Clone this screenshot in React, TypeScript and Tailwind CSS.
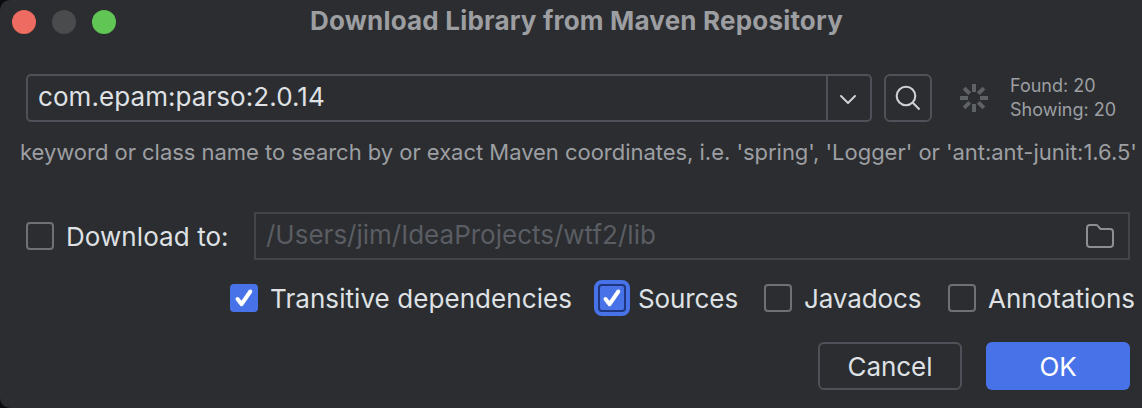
import { useState } from "react";

function CheckMark() {
  return (
    <svg viewBox="0 0 28 28" className="size-7 shrink-0" fill="none">
      <path d="M7.5 15L11.6 20.2L20.3 7.5" stroke="#fff" strokeWidth="4" strokeLinecap="round" strokeLinejoin="round" />
    </svg>
  );
}

type CheckProps = {
  label: string;
  checked?: boolean;
  focused?: boolean;
  className?: string;
  textClass?: string;
};

function Check({ label, checked = false, focused = false, className = "", textClass = "" }: CheckProps) {
  const [on, setOn] = useState(checked);
  const box = on
    ? focused
      ? "bg-[#4873e8] border-2 border-[#1f3780] outline-4 outline-[#4873e8]"
      : "bg-[#4873e8]"
    : "border-2 border-[#6f7176]";
  return (
    <button
      type="button"
      role="checkbox"
      aria-checked={on}
      onClick={() => setOn(!on)}
      className={`flex h-7 shrink-0 items-center whitespace-nowrap text-[26px] text-[#dfe1e5] outline-none ${className}`}
    >
      <span className={`flex size-7 shrink-0 items-center justify-center rounded-[4px] ${box}`}>{on && <CheckMark />}</span>
      <span className={`ml-3 pt-0.5 leading-7 ${textClass}`}>{label}</span>
    </button>
  );
}

function Spinner() {
  return (
    <svg viewBox="-14 -14 28 28" className="size-7 shrink-0" stroke="#5f6265" strokeWidth="4">
      <path d="M0 -14V-6M0 6V14M-14 0H-6M6 0H14M-9.9 -9.9L-4.3 -4.3M4.3 4.3L9.9 9.9M-9.9 9.9L-4.3 4.3M4.3 -4.3L9.9 -9.9" />
    </svg>
  );
}

export default function App() {
  return (
    <div className="h-[408px] w-[1142px] overflow-hidden bg-[#0c0d0f] font-['Inter',sans-serif]">
      <div className="flex h-full flex-col overflow-hidden rounded-l-[10px] bg-[#2b2d30]">
        <header className="flex h-[74px] shrink-0 items-start pt-[9px]">
          <div className="flex w-[310px] shrink-0 gap-4 pt-px pl-3">
            <span className="size-6 rounded-full bg-[#ed6b60]" />
            <span className="size-6 rounded-full bg-[#4a4b4d]" />
            <span className="size-6 rounded-full bg-[#61c555]" />
          </div>
          <h1 className="text-[26px] leading-6 font-bold tracking-[0.19px] whitespace-nowrap text-[#9d9ea1]">
            Download Library from Maven Repository
          </h1>
        </header>

        <div className="flex h-12 shrink-0 items-center pl-[26px]">
          <div className="flex h-12 w-[846px] shrink-0 rounded-[5px] border-2 border-[#4e5157]">
            <div className="flex-1 pl-[10px] text-[26px] leading-[42px] tracking-[0.07px] whitespace-nowrap text-[#dfe1e5]">
              <span>com.epam:parso:2.0.14</span>
            </div>
            <div className="flex w-[44px] items-center justify-center border-l-2 border-[#4e5157]">
              <svg viewBox="0 0 18 12" className="mt-1 mr-0.5 h-3 w-[18px]" fill="none" stroke="#ced0d6" strokeWidth="2" strokeLinecap="round" strokeLinejoin="round">
                <path d="M2 2L9 9L16 2" />
              </svg>
            </div>
          </div>
          <div className="ml-3 flex size-12 shrink-0 items-center justify-center rounded-[6px] border-2 border-[#4e5157]">
            <svg viewBox="0 0 28 28" className="size-7" fill="none" stroke="#ced0d6" strokeWidth="2.1">
              <circle cx="12" cy="12" r="9.3" />
              <path d="M18.6 18.6L25.5 25.5" />
            </svg>
          </div>
          <div className="ml-7">
            <Spinner />
          </div>
          <div className="ml-[22px] text-[18px] leading-6 whitespace-nowrap text-[#9d9fa3]">
            <div>Found: 20</div>
            <div>Showing: 20</div>
          </div>
        </div>

        <p className="mt-[18px] h-6 shrink-0 pl-5 text-[22px] leading-6 tracking-[-0.03px] whitespace-nowrap text-[#9d9fa3]">
          keyword or class name to search by or exact Maven coordinates, i.e. 'spring', 'Logger' or 'ant:ant-junit:1.6.5'
        </p>

        <div className="mt-12 flex h-12 shrink-0 items-center pr-3 pl-[26px]">
          <Check label="Download to:" className="w-[228px]" textClass="tracking-[0.07px]" />
          <div className="flex h-12 flex-1 items-center border-2 border-[#43454a]">
            <span className="flex-1 pb-0.5 pl-[10px] text-[26px] leading-[42px] whitespace-nowrap text-[#5a5d63]">
              /Users/jim/IdeaProjects/wtf2/lib
            </span>
            <svg viewBox="0 0 28 24" className="mr-[14px] h-6 w-7" fill="none" stroke="#8c8e92" strokeWidth="2" strokeLinejoin="round">
              <path d="M1 4a3 3 0 0 1 3-3H10.2a2 2 0 0 1 1.4.6L14.5 5H24a3 3 0 0 1 3 3V20a3 3 0 0 1-3 3H4a3 3 0 0 1-3-3Z" />
            </svg>
          </div>
        </div>

        <div className="mt-6 flex h-7 shrink-0 pl-[230px]">
          <Check label="Transitive dependencies" checked className="w-[368px]" textClass="tracking-[0.07px]" />
          <Check label="Sources" checked focused className="w-[166px]" textClass="tracking-[-0.1px]" />
          <Check label="Javadocs" className="w-[184px]" textClass="tracking-[-0.1px]" />
          <Check label="Annotations" />
        </div>

        <footer className="mt-[30px] flex h-12 shrink-0 justify-end gap-6 pr-3 text-[26px]">
          <button type="button" className="h-12 w-36 rounded-[6px] border-2 border-[#4e5157] tracking-[-0.07px] text-[#dfe1e5]">
            Cancel
          </button>
          <button type="button" className="h-12 w-36 rounded-[6px] bg-[#4873e8] tracking-[-0.2px] text-white">
            OK
          </button>
        </footer>
      </div>
    </div>
  );
}
